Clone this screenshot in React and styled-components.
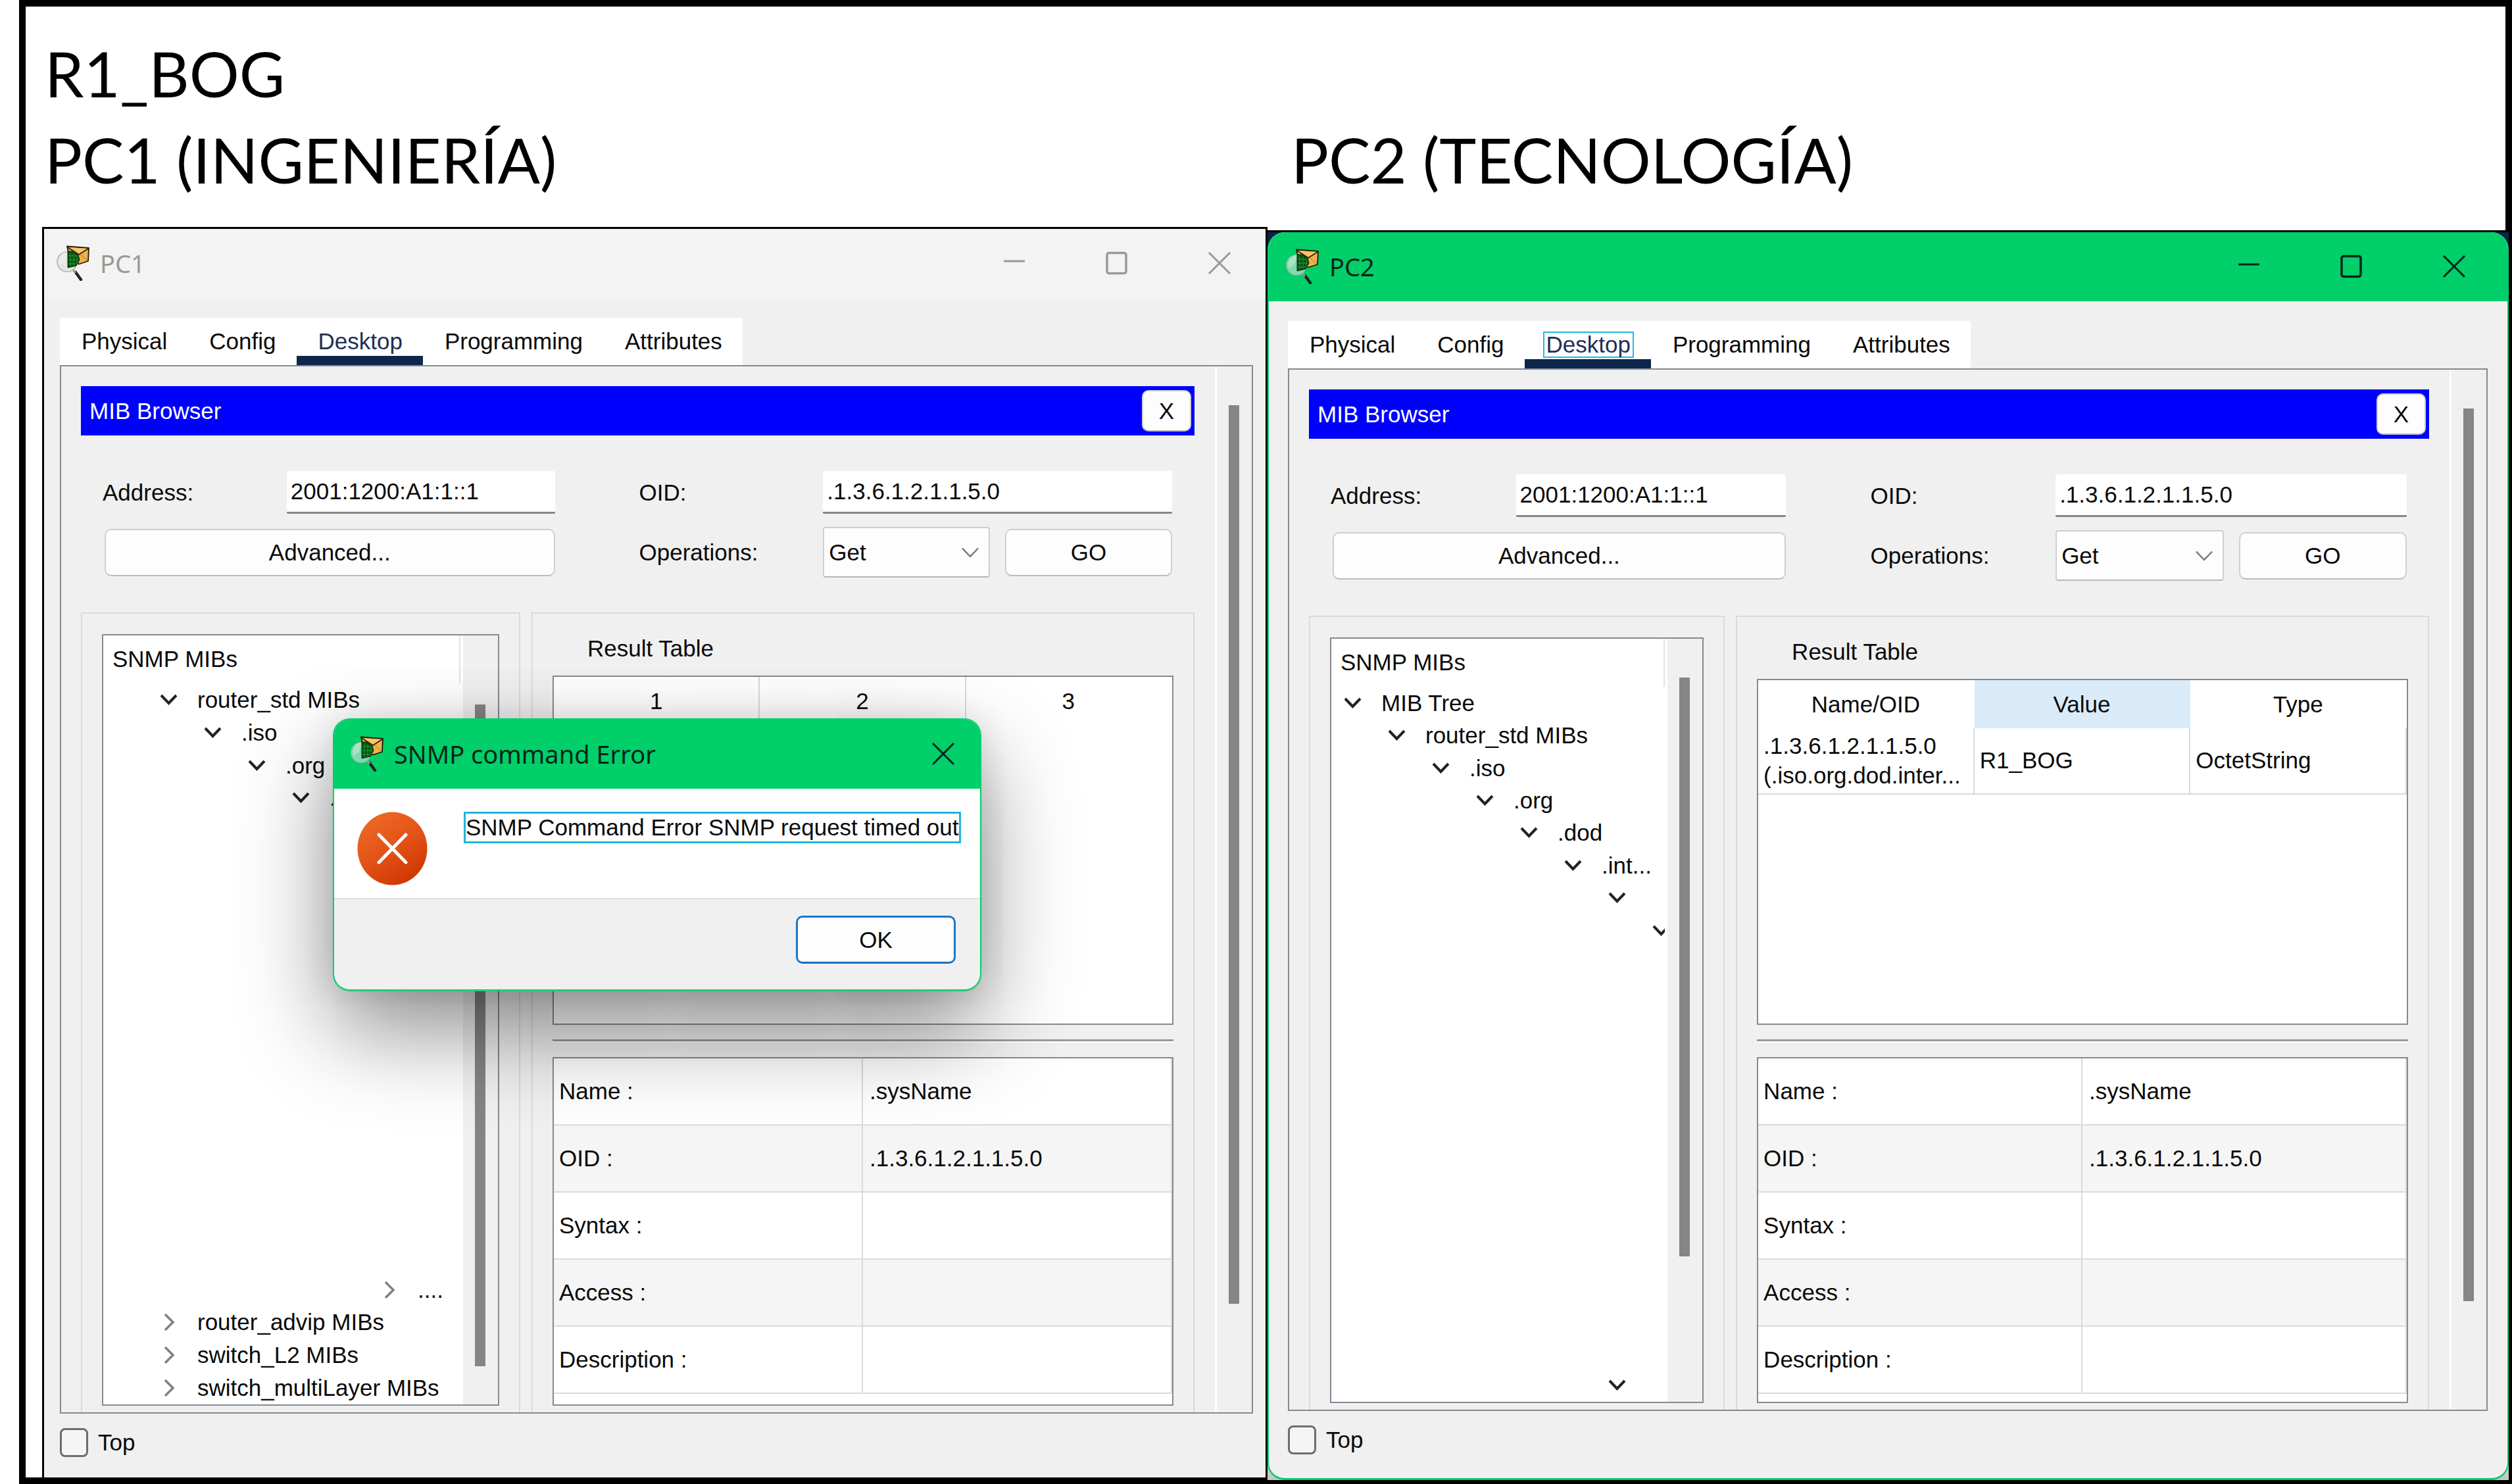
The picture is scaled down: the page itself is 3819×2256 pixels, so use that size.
import React from "react";
import styled, { createGlobalStyle } from "styled-components";

const UI = '"Liberation Sans", Arial, sans-serif';
const TITLE = '"Noto Sans", "Segoe UI", sans-serif';
const HEADING = 'Lato, Calibri, sans-serif';
const GREEN = "#01cf6a";
const EDGE = "#858991";
const FACE = "#f0f0f0";
const RULE = "#dadada";

const GlobalStyle = createGlobalStyle`
  *, *::before, *::after { box-sizing: border-box; }
  body { margin: 0; background: #fff; color: #0a0a0a; font: 35px/40px ${UI}; }
  button, input, select { font: inherit; color: inherit; margin: 0; }
  h1, h2, h3, p, ul { margin: 0; padding: 0; font-weight: 400; }
`;

/* ---------- page ---------- */

const Page = styled.main`
  min-height: 100vh;
  display: flex;
  padding-left: 29px;
`;

const Frame = styled.div`
  flex: 1;
  min-width: 0;
  border: 10px solid #000;
  padding: 36px 0 0 25px;
  display: flex;
  flex-direction: column;
  gap: 37px;
`;

const Columns = styled.div`
  display: grid;
  grid-template-columns: minmax(0, 1863fr) minmax(0, 1887fr);
  margin-right: -5px;
`;

const Headings = styled(Columns)`
  align-items: end;
`;

const Windows = styled(Columns)`
  flex: 1;
`;

const Heading = styled.h1`
  font: 400 95px/131px ${HEADING};
  color: #000;
  white-space: pre-line;
  padding-left: ${(p) => (p.$indent ? 36 : 4)}px;
`;

/* ---------- windows ---------- */

const Shell = styled.section`
  position: relative;
  display: flex;
  border: solid #000;
  border-width: ${(p) => (p.$active ? "3px 0 0" : "3px 3px 0")};
  margin: ${(p) => (p.$active ? "5px 0 -4px" : "0")};
  background: ${(p) =>
    p.$active ? "linear-gradient(#0b2346 50%, #c8c8c8 50%)" : FACE};
`;

const WindowBody = styled.div`
  flex: 1;
  min-width: 0;
  display: flex;
  flex-direction: column;
  overflow: hidden;
  background: ${FACE};
  border: ${(p) => (p.$active ? `solid ${GREEN}` : "none")};
  border-width: 0 2px 3px;
  border-radius: ${(p) => (p.$active ? "26px" : "0")};
`;

const TitleBar = styled.header`
  height: 105px;
  flex: none;
  display: flex;
  align-items: center;
  gap: 15px;
  background: ${(p) => (p.$active ? GREEN : "#f3f3f3")};
  color: ${(p) => (p.$active ? "#06251a" : "#999")};
  padding: 0 ${(p) => p.$right}px 2px ${(p) => p.$left}px;
`;

const TitleText = styled.h2`
  flex: 1;
  font: 400 38px/48px ${TITLE};
`;

const Controls = styled.div`
  display: flex;
  gap: 16px;
`;

const ControlButton = styled.button`
  width: ${(p) => p.$width || 140}px;
  height: 80px;
  border: 0;
  padding: 0;
  background: none;
  display: grid;
  place-items: center;
`;

const WindowContent = styled.div`
  flex: 1;
  display: flex;
  flex-direction: column;
  padding: ${(p) => (p.$active ? "30px 30px 36px 29px" : "30px 19px 31px 24px")};
`;

const Tabs = styled.nav`
  display: flex;
  align-self: flex-start;
  background: #fff;
`;

const Tab = styled.button`
  height: 72px;
  border: 0;
  border-bottom: 14px solid ${(p) => (p.$selected ? "#0d274c" : "transparent")};
  background: none;
  padding: 14px 26px 0 28px;
  line-height: 40px;
  color: ${(p) => (p.$selected ? "#1f2f55" : "inherit")};
`;

const TabLabel = styled.span`
  display: inline-block;
  border: 2px solid ${(p) => (p.$focused ? "#1fb8e6" : "transparent")};
  padding: 0 3px;
  line-height: 36px;
`;

const Panel = styled.div`
  flex: 1;
  display: flex;
  border: 2px solid ${EDGE};
`;

const PanelMain = styled.div`
  flex: 1;
  min-width: 0;
  display: flex;
  flex-direction: column;
  padding: 30px 31px 0 30px;
`;

const PanelScroll = styled.div`
  flex: none;
  width: 56px;
  border-left: 3px solid #fdfdfd;
  padding: 59px 0 165px 18px;
  display: flex;
`;

const Thumb = styled.div`
  width: 16px;
  background: #858585;
`;

const Footer = styled.label`
  display: flex;
  align-items: center;
  gap: 15px;
  padding-top: 22px;
`;

const CheckBox = styled.input`
  appearance: none;
  width: 43px;
  height: 44px;
  border: 3px solid #6d6d6d;
  border-radius: 8px;
  background: #f5f5f5;
`;

/* ---------- MIB browser ---------- */

const BrowserBar = styled.div`
  height: 75px;
  flex: none;
  display: flex;
  align-items: center;
  justify-content: space-between;
  background: #0000ff;
  color: #fff;
  padding: 0 5px 0 13px;
`;

const BarTitle = styled.h3`
  font-size: 35px;
`;

const PushButton = styled.button`
  height: ${(p) => p.$height || 72}px;
  width: ${(p) => (p.$width ? `${p.$width}px` : "auto")};
  border: ${(p) => (p.$primary ? "3px solid #1c78c6" : "2px solid #cfcfcf")};
  border-bottom-color: ${(p) => (p.$primary ? "#1c6fb8" : "#bcbcbc")};
  border-radius: 10px;
  background: #fdfdfd;
  color: #0a0a0a;
  padding: 0;
`;

const Form = styled.form`
  flex: none;
  display: grid;
  grid-template-columns:
    minmax(0, 280fr) minmax(0, 408fr) minmax(0, 128fr)
    minmax(0, 280fr) minmax(0, 254fr) 23px minmax(0, 254fr);
  align-items: center;
  row-gap: 20px;
  padding: 54px 34px 53px 33px;
`;

const TextBox = styled.input`
  height: 65px;
  min-width: 0;
  border: 0;
  border-bottom: 3px solid #868686;
  border-radius: 4px 4px 2px 2px;
  background: #fff;
  padding: 0 6px;
  outline: 0;
  ${(p) => p.$wide && "grid-column: span 3;"}
`;

const AdvancedButton = styled(PushButton)`
  grid-column: span 2;
  margin-left: 3px;
`;

const FieldLabel = styled.label`
  grid-column: 4;
`;

const SelectWrap = styled.div`
  position: relative;
  height: 77px;

  svg {
    position: absolute;
    right: 17px;
    top: 31px;
    pointer-events: none;
  }
`;

const Select = styled.select`
  appearance: none;
  width: 100%;
  height: 100%;
  border: 2px solid #cfcfcf;
  border-bottom-color: #b8b8b8;
  border-radius: 4px;
  background: #fdfdfd;
  padding: 0 7px;
`;

const GoButton = styled(PushButton)`
  grid-column: 7;
`;

const Groups = styled.div`
  flex: 1;
  display: grid;
  grid-template-columns: ${(p) => p.$split};
  gap: 17px;
`;

const Group = styled.div`
  min-width: 0;
  display: flex;
  flex-direction: column;
  border: 2px solid ${RULE};
  border-bottom: 0;
  padding: 31px 30px 10px;
`;

const TreeBox = styled.div`
  flex: 1;
  display: flex;
  border: 2px solid ${EDGE};
  background: #fff;
`;

const TreeMain = styled.div`
  flex: 1;
  min-width: 0;
  display: flex;
  flex-direction: column;
  padding-right: 4px;
`;

const TreeHeader = styled.h3`
  height: 73px;
  flex: none;
  padding: 16px 0 0 14px;
  font-size: 35px;
  border-right: 2px solid #e2e2e2;
`;

const TreeList = styled.ul`
  flex: 1;
  display: grid;
  grid-template-rows: repeat(22, minmax(0, 1fr));
  list-style: none;
`;

const TreeRow = styled.li`
  grid-row: ${(p) => p.$row};
  min-width: 0;
  overflow: hidden;
  white-space: nowrap;
  display: flex;
  align-items: center;
  gap: 30px;
  padding-left: ${(p) => 19 + 67 * p.$level}px;

  svg {
    flex: none;
  }
`;

const TreeScroll = styled.div`
  flex: none;
  width: 53px;
  background: ${FACE};
  display: flex;
  padding: ${(p) => p.$before}px 0 ${(p) => p.$after}px 18px;
`;

const ResultLabel = styled.h3`
  height: 63px;
  flex: none;
  padding: 2px 0 0 53px;
  font-size: 35px;
`;

const TableBox = styled.div`
  flex: 1 1 0;
  min-height: 0;
  overflow: hidden;
  border: 2px solid ${EDGE};
  background: #fff;
`;

const Splitter = styled.div`
  flex: none;
  height: 49px;
  display: flex;
  align-items: center;

  &::before {
    content: "";
    flex: 1;
    height: 5px;
    border-top: 3px solid #9a9a9a;
    background: #fff;
  }
`;

const Table = styled.table`
  width: 100%;
  table-layout: fixed;
  border-collapse: separate;
  border-spacing: 0;
`;

const HeadCell = styled.th`
  height: 73px;
  padding: 0;
  font-weight: 400;
  background: ${(p) => (p.$current ? "#d9ebf9" : "#fff")};
  border-right: 2px solid ${(p) => (p.$ruled ? RULE : "transparent")};
`;

const Cell = styled.td`
  height: 101px;
  padding: 0 8px 2px;
  line-height: 45px;
  white-space: pre;
  border-right: 2px solid ${RULE};
  border-bottom: 2px solid ${RULE};
`;

const DetailRow = styled.tr`
  background: #fff;

  &:nth-child(even) {
    background: #f5f5f5;
  }
`;

const DetailName = styled.th`
  height: 102px;
  padding: 0 8px;
  text-align: left;
  font-weight: 400;
  border-right: 2px solid ${RULE};
  border-bottom: 2px solid ${RULE};
`;

const DetailValue = styled(DetailName).attrs({ as: "td" })`
  padding: 0 10px;
`;

/* ---------- dialog ---------- */

const Dialog = styled.div`
  position: absolute;
  left: 439px;
  top: 744px;
  width: 986px;
  border: 2px solid ${GREEN};
  border-bottom: 3px solid #2cc77a;
  border-radius: 26px;
  overflow: hidden;
  background: ${FACE};
  box-shadow: 0 58px 140px rgba(0, 0, 0, 0.46), 0 0 50px rgba(0, 0, 0, 0.1);
`;

const DialogBody = styled.div`
  height: 168px;
  display: flex;
  align-items: flex-start;
  gap: 55px;
  padding: 35px 34px 0 35px;
  background: #fff;
  border-bottom: 2px solid #dfdfdf;

  svg {
    flex: none;
  }
`;

const Message = styled.p`
  border: 3px solid #22b5dd;
  white-space: nowrap;
  line-height: 42px;
`;

const DialogFooter = styled.div`
  display: flex;
  justify-content: flex-end;
  padding: 25px 37px 39px;
`;

/* ---------- drawings ---------- */

const AppIcon = ({ glass }) => (
  <svg width="51" height="54" viewBox="0 0 51 54" aria-hidden="true">
    <path d="M29 41 L37 52" stroke="#222" strokeWidth="4.5" strokeLinecap="round" />
    <path d="M24 36 L29 42" stroke="#8a9a8e" strokeWidth="3" />
    <circle cx="16" cy="25" r="15" fill={glass} stroke="#a9b8ab" strokeWidth="1.5" />
    <path d="M7 14 Q12 9 17 10 L13 24 L4 30 Q2 20 7 14Z" fill="#fff" opacity="0.3" />
    <path d="M16 1.5 L49 4 L48 24 L34 28.5 L20 20Z" fill="#efb04d" stroke="#241a08" strokeWidth="1.8" strokeLinejoin="round" />
    <path d="M17 3 L34 14 L48 5" fill="#f7c66a" stroke="#3a2808" strokeWidth="2" strokeLinejoin="round" />
    <path d="M36 14 L47 23" stroke="#c98f35" strokeWidth="1.2" />
    <path d="M17 9 L25 9 L33 15 L35 22 L30 31 L17 34Z" fill="#0b4d12" stroke="#062b08" strokeWidth="1" />
    <path d="M21 11 V32 M26 12 V31 M31 16 V28 M18 16 H31 M18 22 H33 M18 28 H30" stroke="#14922a" strokeWidth="1.3" fill="none" />
  </svg>
);

const MinimizeGlyph = () => (
  <svg width="34" height="42" viewBox="0 0 34 42" aria-hidden="true">
    <path d="M1 18 H33" stroke="currentColor" strokeWidth="3" />
  </svg>
);

const MaximizeGlyph = () => (
  <svg width="34" height="36" viewBox="0 0 34 36" fill="none" aria-hidden="true">
    <rect x="2" y="2.5" width="29" height="31" rx="3" stroke="currentColor" strokeWidth="3.5" />
  </svg>
);

const CloseGlyph = () => (
  <svg width="36" height="36" viewBox="0 0 36 36" fill="none" aria-hidden="true">
    <path d="M2 2 L34 34 M34 2 L2 34" stroke="currentColor" strokeWidth="3" />
  </svg>
);

const TreeChevron = ({ open }) => (
  <svg width="27" height="28" viewBox="0 0 27 28" fill="none" aria-hidden="true">
    {open ? (
      <path d="M2 7 L13.5 19 L25 7" stroke="#222" strokeWidth="4" />
    ) : (
      <path d="M8 2 L20 14 L8 26" stroke="#808080" strokeWidth="3.5" />
    )}
  </svg>
);

const SelectChevron = () => (
  <svg width="26" height="16" viewBox="0 0 26 16" fill="none" aria-hidden="true">
    <path d="M1 1.5 L13 14 L25 1.5" stroke="#777" strokeWidth="2.5" />
  </svg>
);

const ErrorIcon = () => (
  <svg width="107" height="112" viewBox="0 0 107 112" aria-hidden="true">
    <defs>
      <linearGradient id="errorFill" x1="0.2" y1="0" x2="0.8" y2="1">
        <stop offset="0" stopColor="#ee6a27" />
        <stop offset="0.5" stopColor="#e35217" />
        <stop offset="1" stopColor="#cc3300" />
      </linearGradient>
    </defs>
    <ellipse cx="53.5" cy="56" rx="53" ry="55.5" fill="url(#errorFill)" />
    <path d="M33 35 L74 77 M74 35 L33 77" stroke="#fff" strokeWidth="5" strokeLinecap="round" />
  </svg>
);

/* ---------- content ---------- */

const TABS = ["Physical", "Config", "Desktop", "Programming", "Attributes"];

const DETAILS = [
  ["Name :", ".sysName"],
  ["OID :", ".1.3.6.1.2.1.1.5.0"],
  ["Syntax :", ""],
  ["Access :", ""],
  ["Description :", ""],
];

const PC1 = {
  id: "pc1",
  title: "PC1",
  active: false,
  left: 19,
  right: 0,
  split: "minmax(0, 668fr) minmax(0, 1008fr)",
  scroll: [105, 58],
  columns: ["1", "2", "3"],
  ruled: true,
  rows: [],
  tree: [
    { row: 1, level: 1, open: true, text: "router_std MIBs" },
    { row: 2, level: 2, open: true, text: ".iso" },
    { row: 3, level: 3, open: true, text: ".org" },
    { row: 4, level: 4, open: true, text: ".dod" },
    { row: 19, level: 6, open: false, text: "...." },
    { row: 20, level: 1, open: false, text: "router_advip MIBs" },
    { row: 21, level: 1, open: false, text: "switch_L2 MIBs" },
    { row: 22, level: 1, open: false, text: "switch_multiLayer MIBs" },
  ],
};

const PC2 = {
  id: "pc2",
  title: "PC2",
  active: true,
  left: 26,
  right: 11,
  split: "minmax(0, 631fr) minmax(0, 1052fr)",
  scroll: [59, 221],
  columns: ["Name/OID", "Value", "Type"],
  current: "Value",
  rows: [[".1.3.6.1.2.1.1.5.0\n(.iso.org.dod.inter...", "R1_BOG", "OctetString"]],
  tree: [
    { row: 1, level: 0, open: true, text: "MIB Tree" },
    { row: 2, level: 1, open: true, text: "router_std MIBs" },
    { row: 3, level: 2, open: true, text: ".iso" },
    { row: 4, level: 3, open: true, text: ".org" },
    { row: 5, level: 4, open: true, text: ".dod" },
    { row: 6, level: 5, open: true, text: ".int..." },
    { row: 7, level: 6, open: true, text: "" },
    { row: 8, level: 7, open: true, text: "" },
    { row: 22, level: 6, open: true, text: "" },
  ],
};

function MibBrowser({ pc }) {
  return (
    <PanelMain>
      <BrowserBar>
        <BarTitle>MIB Browser</BarTitle>
        <PushButton type="button" $width={75} $height={63}>X</PushButton>
      </BrowserBar>

      <Form onSubmit={(e) => e.preventDefault()}>
        <label htmlFor={`${pc.id}-address`}>Address:</label>
        <TextBox id={`${pc.id}-address`} defaultValue="2001:1200:A1:1::1" />
        <FieldLabel htmlFor={`${pc.id}-oid`}>OID:</FieldLabel>
        <TextBox $wide id={`${pc.id}-oid`} defaultValue=".1.3.6.1.2.1.1.5.0" />

        <AdvancedButton type="button">Advanced...</AdvancedButton>
        <FieldLabel htmlFor={`${pc.id}-operation`}>Operations:</FieldLabel>
        <SelectWrap>
          <Select id={`${pc.id}-operation`} defaultValue="Get">
            <option>Get</option>
          </Select>
          <SelectChevron />
        </SelectWrap>
        <GoButton type="submit">GO</GoButton>
      </Form>

      <Groups $split={pc.split}>
        <Group>
          <TreeBox>
            <TreeMain>
              <TreeHeader>SNMP MIBs</TreeHeader>
              <TreeList>
                {pc.tree.map((node) => (
                  <TreeRow key={node.row} $row={node.row} $level={node.level}>
                    <TreeChevron open={node.open} />
                    {node.text}
                  </TreeRow>
                ))}
              </TreeList>
            </TreeMain>
            <TreeScroll $before={pc.scroll[0]} $after={pc.scroll[1]}>
              <Thumb />
            </TreeScroll>
          </TreeBox>
        </Group>

        <Group>
          <ResultLabel>Result Table</ResultLabel>
          <TableBox>
            <Table>
              <thead>
                <tr>
                  {pc.columns.map((name, i) => (
                    <HeadCell
                      key={name}
                      scope="col"
                      $current={name === pc.current}
                      $ruled={pc.ruled && i < 2}
                    >
                      {name}
                    </HeadCell>
                  ))}
                </tr>
              </thead>
              <tbody>
                {pc.rows.map((row) => (
                  <tr key={row[1]}>
                    {row.map((value) => (
                      <Cell key={value}>{value}</Cell>
                    ))}
                  </tr>
                ))}
              </tbody>
            </Table>
          </TableBox>
          <Splitter />
          <TableBox>
            <Table>
              <tbody>
                {DETAILS.map(([name, value]) => (
                  <DetailRow key={name}>
                    <DetailName scope="row">{name}</DetailName>
                    <DetailValue>{value}</DetailValue>
                  </DetailRow>
                ))}
              </tbody>
            </Table>
          </TableBox>
        </Group>
      </Groups>
    </PanelMain>
  );
}

function DeviceWindow({ pc, children }) {
  return (
    <Shell $active={pc.active}>
      <WindowBody $active={pc.active}>
        <TitleBar $active={pc.active} $left={pc.left} $right={pc.right}>
          <AppIcon glass={pc.active ? "#7fdcae" : "#e4e6e0"} />
          <TitleText>{pc.title}</TitleText>
          <Controls>
            <ControlButton aria-label="Minimize"><MinimizeGlyph /></ControlButton>
            <ControlButton aria-label="Maximize"><MaximizeGlyph /></ControlButton>
            <ControlButton aria-label="Close"><CloseGlyph /></ControlButton>
          </Controls>
        </TitleBar>
        <WindowContent $active={pc.active}>
          <Tabs>
            {TABS.map((name) => (
              <Tab key={name} type="button" $selected={name === "Desktop"}>
                <TabLabel $focused={pc.active && name === "Desktop"}>{name}</TabLabel>
              </Tab>
            ))}
          </Tabs>
          <Panel>
            <MibBrowser pc={pc} />
            <PanelScroll>
              <Thumb />
            </PanelScroll>
          </Panel>
          <Footer>
            <CheckBox type="checkbox" />
            Top
          </Footer>
        </WindowContent>
      </WindowBody>
      {children}
    </Shell>
  );
}

function ErrorDialog() {
  return (
    <Dialog role="alertdialog" aria-labelledby="error-title">
      <TitleBar $active $left={25} $right={0}>
        <AppIcon glass="#7fdcae" />
        <TitleText id="error-title">SNMP command Error</TitleText>
        <ControlButton $width={112} aria-label="Close"><CloseGlyph /></ControlButton>
      </TitleBar>
      <DialogBody>
        <ErrorIcon />
        <Message>SNMP Command Error SNMP request timed out</Message>
      </DialogBody>
      <DialogFooter>
        <PushButton type="button" $primary $width={243} $height={73}>OK</PushButton>
      </DialogFooter>
    </Dialog>
  );
}

export default function App() {
  return (
    <Page>
      <GlobalStyle />
      <Frame>
        <Headings>
          <Heading>{"R1_BOG\nPC1 (INGENIERÍA)"}</Heading>
          <Heading $indent>PC2 (TECNOLOGÍA)</Heading>
        </Headings>
        <Windows>
          <DeviceWindow pc={PC1}>
            <ErrorDialog />
          </DeviceWindow>
          <DeviceWindow pc={PC2} />
        </Windows>
      </Frame>
    </Page>
  );
}
